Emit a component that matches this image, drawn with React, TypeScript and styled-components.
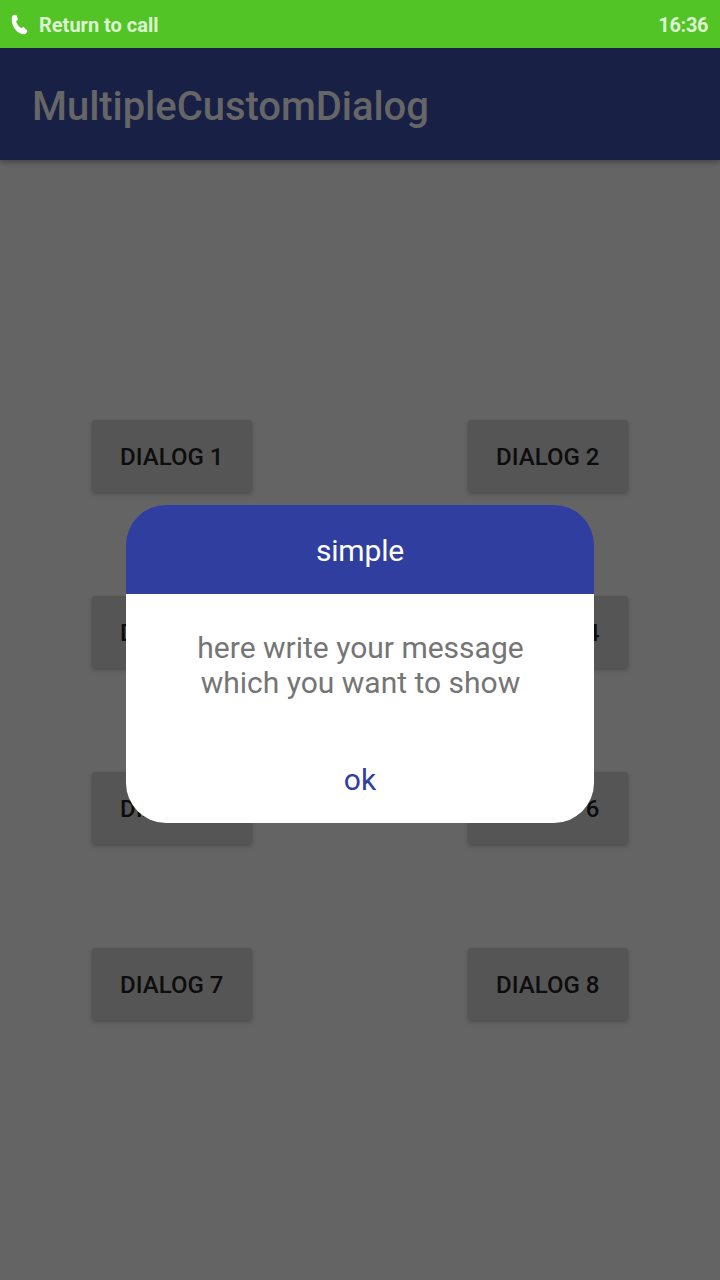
import React from "react";
import styled, { createGlobalStyle } from "styled-components";

const Global = createGlobalStyle`
  * { box-sizing: border-box; }
  body { margin: 0; font-family: Roboto, sans-serif; }
`;

const Screen = styled.div`
  position: relative;
  width: 720px;
  height: 1280px;
  overflow: hidden;
  display: flex;
  flex-direction: column;
  background: #646464;
`;

const StatusBar = styled.header`
  position: relative;
  z-index: 1;
  height: 48px;
  flex: none;
  display: flex;
  align-items: center;
  justify-content: space-between;
  padding: 2px 12px 0 11px;
  background: #53c425;
  color: #dcf3d3;
  font-size: 20px;
  font-weight: 700;
`;

const CallInfo = styled.div`
  display: flex;
  align-items: center;
  gap: 11px;
`;

const CallIcon = styled.svg`
  display: block;
  flex: none;
  margin-top: -2px;
`;

const Clock = styled.span`
  letter-spacing: -0.3px;
  margin-right: -0.3px;
`;

const AppBar = styled.div`
  position: relative;
  height: 112px;
  flex: none;
  display: flex;
  align-items: center;
  padding: 4px 32px 0;
  background: #192046;
  box-shadow: 0 2px 6px rgba(0, 0, 0, 0.35);
`;

const Title = styled.h1`
  margin: 0;
  color: #666;
  font-size: 40px;
  font-weight: 500;
  letter-spacing: -0.05px;
`;

const ButtonGrid = styled.main`
  display: grid;
  grid-template-columns: 160px 160px;
  grid-auto-rows: 72px;
  justify-content: space-between;
  row-gap: 104px;
  padding: 260px 92px 0;
`;

const DialogButton = styled.button`
  border: 0;
  padding: 2px 0.5px 0 0;
  border-radius: 4px;
  background: #555;
  color: #0d0d0d;
  font: 500 24px Roboto, sans-serif;
  box-shadow: 0 2px 4px rgba(0, 0, 0, 0.24), 0 0 1px rgba(0, 0, 0, 0.06);
`;

const Dialog = styled.section`
  position: absolute;
  left: 126px;
  top: 505px;
  width: 468px;
  height: 318px;
  border-radius: 40px;
  background: linear-gradient(#303f9f 89px, #fff 89px);
  text-align: center;
  font-size: 30px;
  line-height: 35px;
`;

const DialogHeader = styled.div`
  height: 89px;
  padding-top: 28px;
  color: #fff;
  letter-spacing: -0.15px;
`;

const Message = styled.p`
  margin: 0;
  padding: 36px 60px 0 61px;
  color: #757575;
`;

const Confirm = styled.button`
  display: block;
  width: 100%;
  margin-top: 62px;
  border: 0;
  padding: 0;
  background: none;
  color: #303f9f;
  font: 400 30px/35px Roboto, sans-serif;
`;

export default function App() {
  return (
    <>
      <Global />
      <Screen>
        <StatusBar>
          <CallInfo>
            <CallIcon width="17" height="21" viewBox="0 0 17 21" fill="#fff">
              <path d="M2.700 1.100 4.400.7c.5-.1.900.1 1.100.6l1.300 3.600c.2.500 0 .9-.3 1.200L5.100 7.400c.9 2.700 2.500 5 4.800 6.600l2-.8c.5-.2.900-.1 1.200.3l3 3.100c.3.300.3.700.1 1l-1.100 1.700c-.4.600-1 .9-1.700.9C6.700 20.200.7 13.300.7 5.200c0-2.300.5-3.600 2-4.100Z" />
            </CallIcon>
            <span>Return to call</span>
          </CallInfo>
          <Clock>16:36</Clock>
        </StatusBar>
        <AppBar>
          <Title>MultipleCustomDialog</Title>
        </AppBar>
        <ButtonGrid>
          {[1, 2, 3, 4, 5, 6, 7, 8].map((n) => (
            <DialogButton key={n}>DIALOG {n}</DialogButton>
          ))}
        </ButtonGrid>
        <Dialog role="dialog">
          <DialogHeader>simple</DialogHeader>
          <Message>
            here write your message
            <br />
            which you want to show
          </Message>
          <Confirm>ok</Confirm>
        </Dialog>
      </Screen>
    </>
  );
}
